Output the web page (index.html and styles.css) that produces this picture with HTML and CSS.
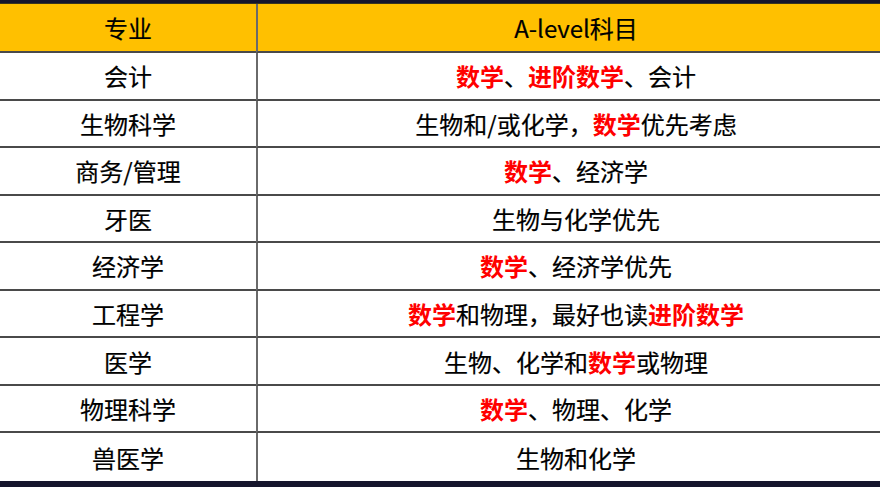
FILE: index.html
```html
<!DOCTYPE html>
<html lang="zh">
<head>
<meta charset="utf-8">
<link rel="stylesheet" href="styles.css">
</head>
<body>
<div class="slide">
  <div class="table">
    <div class="cell head">专业</div>
    <div class="cell head right">A-level科目</div>

    <div class="cell">会计</div>
    <div class="cell right"><b>数学</b>、<b>进阶数学</b>、会计</div>

    <div class="cell">生物科学</div>
    <div class="cell right">生物和/或化学，<b>数学</b>优先考虑</div>

    <div class="cell">商务/管理</div>
    <div class="cell right"><b>数学</b>、经济学</div>

    <div class="cell">牙医</div>
    <div class="cell right">生物与化学优先</div>

    <div class="cell">经济学</div>
    <div class="cell right"><b>数学</b>、经济学优先</div>

    <div class="cell">工程学</div>
    <div class="cell right"><b>数学</b>和物理，最好也读<b>进阶数学</b></div>

    <div class="cell">医学</div>
    <div class="cell right">生物、化学和<b>数学</b>或物理</div>

    <div class="cell">物理科学</div>
    <div class="cell right"><b>数学</b>、物理、化学</div>

    <div class="cell last">兽医学</div>
    <div class="cell right last">生物和化学</div>
  </div>
</div>
</body>
</html>
```

FILE: styles.css
```css
html, body {
  margin: 0;
  padding: 0;
}
body {
  width: 880px;
  height: 487px;
  background: #15152c;
  overflow: hidden;
  font-family: "Noto Sans CJK SC", "Noto Sans", sans-serif;
}
.slide {
  padding-top: 3px;
}
.table {
  display: grid;
  grid-template-columns: 256px 1fr;
  grid-template-rows: 49px repeat(9, 1fr);
  height: 477px;
  background: #fff;
  border-top: 1px solid #3a3420;
}
.cell {
  display: flex;
  align-items: center;
  justify-content: center;
  font-size: 24px;
  color: #000;
  border-bottom: 2px solid #4a4a4a;
  line-height: 1;
  padding-top: 1px;
  -webkit-text-stroke: 0.2px #000;
}
.cell.right {
  border-left: 2px solid #6a6a6a;
  padding-left: 14px;
}
.cell.head {
  background: #ffc000;
}
.cell.last {
  border-bottom: none;
}
.cell b {
  color: #ff0000;
  font-weight: bold;
  -webkit-text-stroke: 0;
}
```
